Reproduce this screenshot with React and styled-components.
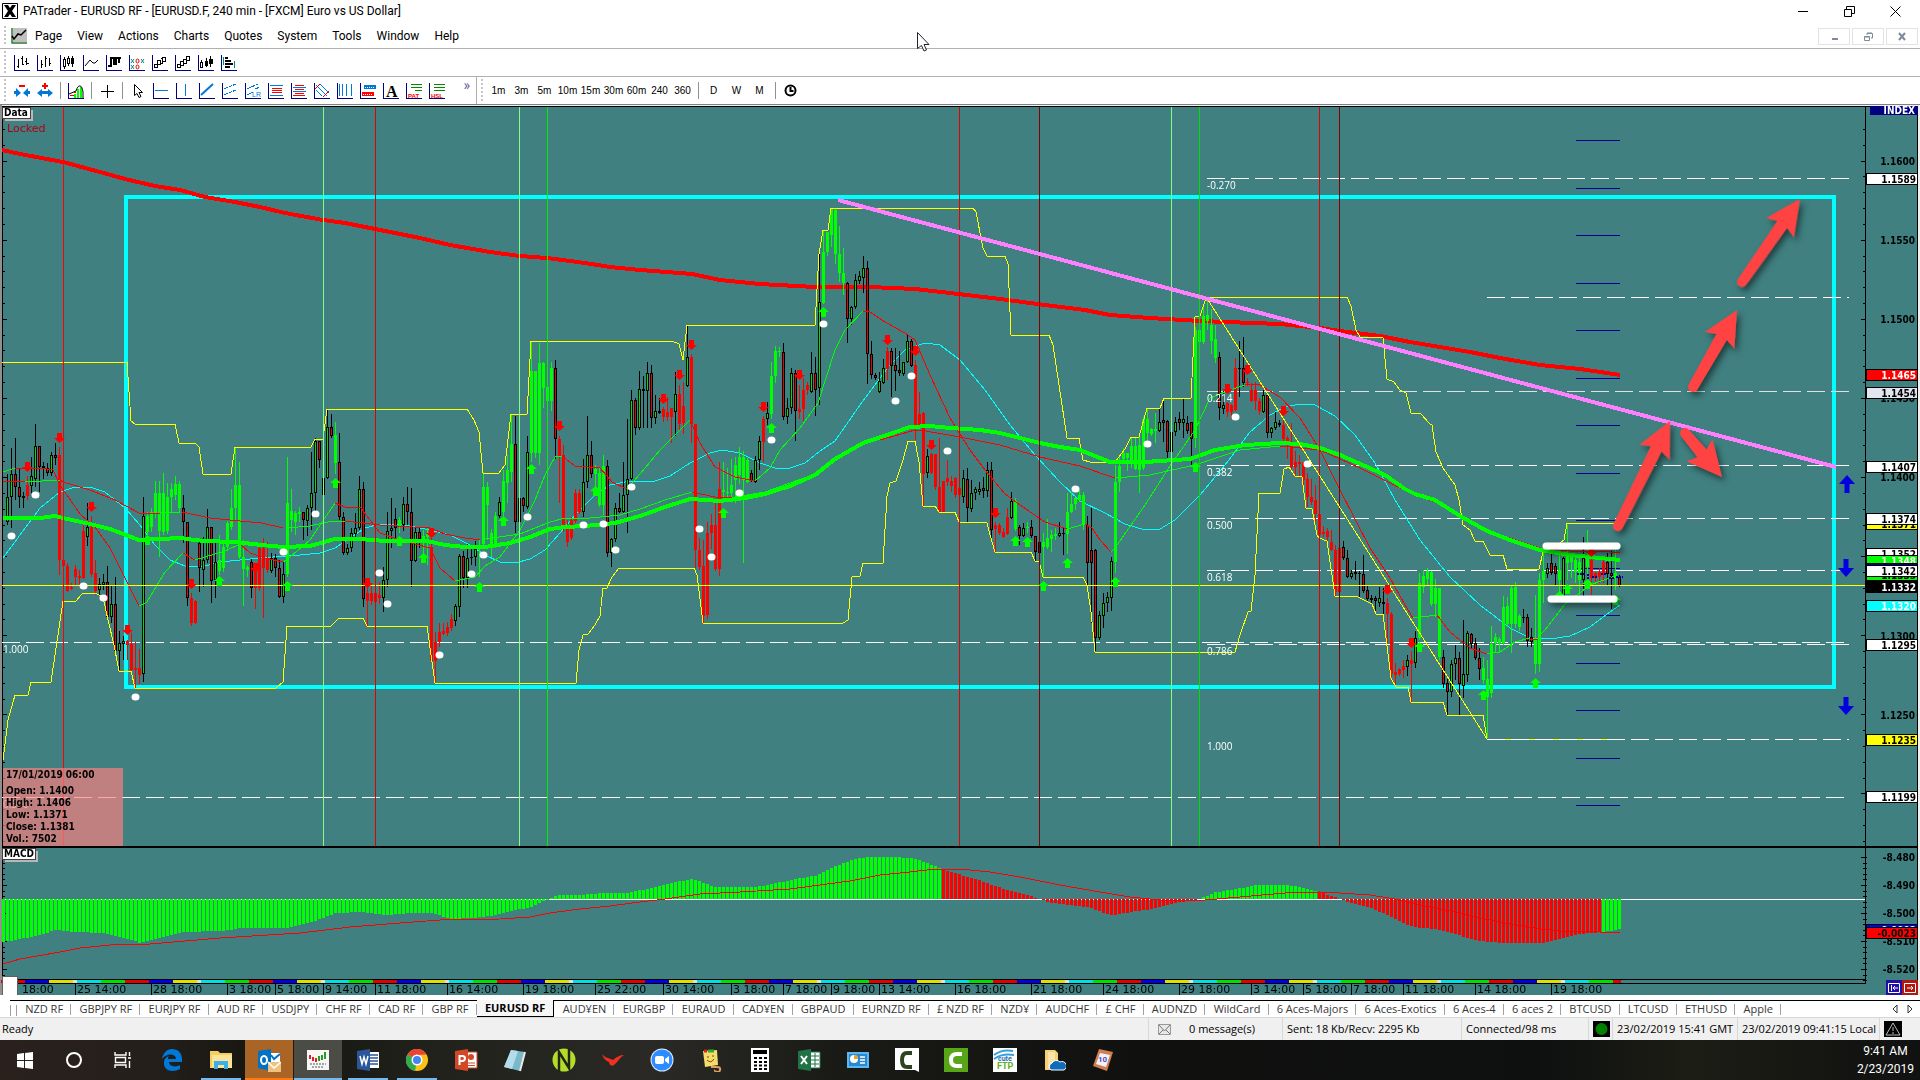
import React from "react";
import styled, { createGlobalStyle, css } from "styled-components";

const UI = `Roboto, "Open Sans", sans-serif`;
const LABEL = `"Open Sans", "Noto Sans", sans-serif`;
const TAHOMA = `"DejaVu Sans Condensed", "DejaVu Sans", sans-serif`;

const GlobalStyle = createGlobalStyle`
  *, *::before, *::after { box-sizing: border-box; }
  body { margin: 0; background: #fff; font-family: ${UI}; color: #000; }
  button { font: inherit; color: inherit; background: none; border: 0; padding: 0; margin: 0; }
`;

/* ---------- market data: bar kind, high, body top, body bottom, low ---------- */

const CANDLES = `
u474,497,522,525 u448,474,497,528 d438,474,487,500 d468,487,497,508 u492,496,498,508 r476,485,496,500 u457,476,486,493 u424,446,479,487 d446,446,467,492 u462,466,468,479
d463,468,473,476 u452,455,473,476 d443,455,458,465 r447,455,560,575 r540,560,566,572 r563,566,591,592 r583,587,589,590 r565,569,577,586 r570,576,578,587 r523,531,578,579
u503,527,537,546 r516,527,574,577 r560,573,591,595 u578,584,590,595 u574,582,585,590 d566,582,617,620 u585,604,617,623 d577,604,651,655 u631,643,651,670 u636,641,644,660
r640,641,645,660 r633,644,670,673 r642,668,670,688 r649,668,675,684 u497,516,674,682 g512,516,532,540 g508,512,527,532 g481,493,513,518 g481,493,531,557 g473,493,532,535
g483,497,531,534 g483,489,497,512 g476,484,495,500 g481,484,508,512 d495,508,522,543 d522,522,598,606 r593,598,623,626 r600,601,623,624 d541,543,568,592 u537,560,570,587
u509,527,560,563 d527,527,581,603 u542,562,580,598 g535,560,571,575 g540,547,568,572 g521,523,547,551 g489,508,527,530 g447,485,508,520 g462,485,557,559 g540,557,569,606
g565,567,570,577 d559,562,588,598 r565,567,588,609 r543,548,588,591 r538,548,568,618 r542,559,570,573 u553,558,571,573 d554,558,568,577 d560,568,597,598 u562,574,597,603
g457,503,574,577 g489,511,520,532 g511,513,522,535 g507,512,514,522 d512,512,520,540 u505,508,521,536 u452,493,508,530 u438,441,493,518 d441,441,460,468 u470,478,495,498
u409,427,478,479 d414,427,436,438 g422,435,463,474 d433,462,517,520 d512,517,553,555 u544,548,553,555 u528,533,548,552 u513,528,534,540 u476,489,528,530 d482,489,599,607
r587,593,601,626 r583,593,601,605 r593,593,602,605 r582,595,598,604 u567,580,598,612 u512,531,580,587 u498,528,531,548 d508,519,528,538 g517,520,527,533 u497,504,525,531
d487,504,512,525 d488,512,561,587 u527,532,561,562 d528,532,539,548 g530,536,539,555 g528,534,537,565 r538,547,661,662 r632,642,661,682 r623,632,642,647 r623,631,634,635
r622,627,633,636 r614,619,628,631 u604,606,621,626 u554,556,607,617 d551,556,578,588 u544,558,578,588 d546,557,558,565 u541,549,557,566 g539,545,547,577 g472,487,544,545
g482,487,505,540 g529,533,544,557 g512,516,544,548 u497,502,516,518 g470,481,512,522 g455,470,483,503 g414,444,472,482 d416,444,522,533 u497,498,522,524 d497,498,506,512
u436,452,507,509 g342,371,453,462 g371,371,453,458 g343,363,453,465 g362,363,388,408 g387,387,401,410 g362,368,401,411 d360,368,439,459 r436,439,456,503 r445,455,527,532
r520,527,542,547 r517,520,538,540 r489,493,521,523 r489,493,512,514 u459,482,512,517 u416,455,482,488 d441,455,474,478 g465,469,474,487 g467,473,505,507 g455,466,505,515
d460,466,553,557 u538,539,553,567 u503,508,539,542 d493,508,512,513 u462,495,512,513 u419,479,495,533 u390,400,479,480 d398,400,428,435 u371,389,428,430 u376,389,391,428
u362,373,391,428 d365,373,418,428 u395,411,418,424 u398,411,413,414 r407,409,417,422 r397,412,417,421 r408,408,417,443 u372,394,412,436 r385,394,424,431 r382,406,423,434
u325,357,386,387 r354,357,424,443 r424,424,550,568 r538,550,567,570 r540,566,616,623 r522,533,615,619 r514,525,533,549 r503,525,569,571 r462,489,569,576 g462,490,492,503
g468,492,493,497 g459,485,493,500 g457,465,480,503 g447,457,475,484 g451,457,480,563 g458,460,482,483 d470,473,481,482 u456,460,482,483 u436,441,460,470 r416,419,442,462
u402,413,419,425 g362,376,414,419 g346,351,376,383 g347,351,352,357 d343,352,417,420 u398,408,417,424 u368,373,408,414 d370,373,411,441 r385,409,412,419 r378,390,409,421
r382,385,390,395 u352,373,392,393 d357,373,390,416 u254,302,388,405 g230,252,303,304 g232,232,252,256 g209,209,235,247 g208,210,254,264 g226,254,273,282 g248,273,283,295
d282,283,319,343 u306,307,319,325 u274,280,307,309 u271,276,281,284 u256,268,278,293 d261,268,354,384 d341,354,375,379 d373,375,378,380 u372,381,392,393 u359,368,383,384
r347,351,369,380 d348,351,366,397 d348,365,371,391 d351,370,373,376 u362,362,374,376 u335,341,362,363 d339,341,366,367 r360,365,428,440 r392,414,427,428 r412,413,474,506
u449,456,473,478 r453,454,473,474 r454,454,487,490 r438,487,512,513 r481,481,512,513 r460,478,482,486 r476,481,486,492 r477,478,495,498 r483,488,495,498 u470,478,497,503
d468,479,508,522 u480,493,509,512 u487,489,493,500 u482,489,492,495 d477,488,491,498 u462,470,491,497 d462,470,530,538 r522,525,529,552 r523,525,533,535 r528,532,537,538
r508,517,534,535 u492,501,518,519 g498,501,529,531 d525,527,536,545 u523,528,536,537 g522,527,528,533 d520,527,536,538 d536,536,552,561 d542,542,553,554 g533,542,547,577
g519,538,547,549 g530,535,539,552 g528,534,536,540 u522,533,536,537 d528,533,534,555 g493,512,534,554 g492,504,512,513 g497,498,504,510 g490,495,500,502 g492,495,525,530
d516,525,563,587 d508,550,563,623 d549,550,638,651 u611,615,638,640 u593,603,616,628 u592,597,603,612 u557,561,598,611 g465,482,562,573 g455,466,482,492 g448,453,459,462
g453,453,458,471 g437,446,460,468 g437,446,469,470 g435,445,470,493 g417,419,468,470 g408,419,433,440 g428,429,434,436 g413,429,431,443 u409,422,431,432 d398,420,423,442
d420,421,452,460 u430,432,452,453 u417,422,432,436 d412,419,423,430 u398,419,423,438 d416,423,431,434 d422,422,439,465 g327,330,438,448 g316,330,342,345 g307,316,342,344
g300,315,321,330 g309,325,341,354 g325,339,358,363 d352,357,408,420 u391,405,409,414 r402,403,412,417 r404,405,412,419 r358,368,410,411 d341,368,369,397 d337,368,383,387
r378,382,383,386 r383,390,401,402 r382,390,401,410 r398,401,411,415 u390,395,412,413 d395,395,433,438 u427,428,433,438 u412,422,428,430 u420,423,425,427 r420,425,439,444
r436,438,444,459 r423,443,467,469 r451,462,467,476 r455,462,464,478 r462,463,480,487 r473,479,497,507 r479,497,502,505 r485,500,514,522 r514,514,535,536 r526,532,534,537
r528,531,537,542 r530,542,550,551 r545,550,592,597 r547,548,592,596 d541,547,558,560 d550,558,577,578 u570,573,577,579 u561,572,574,580 d571,573,574,598 d555,574,591,593
d585,590,599,602 u595,598,600,603 d596,598,601,614 u587,598,603,607 d588,602,604,615 r598,603,614,643 r612,614,674,677 r663,672,675,687 r668,669,674,676 r660,666,670,678
u655,660,667,676 r651,660,664,702 u631,638,663,668 g573,583,638,640 g570,576,587,593 g568,571,579,586 g571,572,604,606 g579,588,604,617 g588,588,657,660 d650,657,684,688
d679,683,692,715 u660,664,692,697 u645,658,664,680 d652,658,684,715 u620,674,686,698 u631,633,675,682 d633,634,644,649 d638,643,658,660 d648,658,669,680 g657,668,680,684
g660,679,697,738 g626,644,693,698 g633,637,643,652 g637,639,643,653 g596,607,643,645 g597,606,624,627 g586,588,624,653 g582,587,624,628 g614,616,627,631 d609,617,618,623
d614,617,641,647 d628,637,642,647 g595,638,664,674 g573,580,664,672 g552,571,580,603 u563,568,574,578 d550,563,573,575 d563,566,574,585 g555,570,580,595 u557,558,596,597
g525,554,563,580 g553,557,562,578 g555,560,572,583 g557,562,580,595 u537,558,580,597 g530,558,567,577 r558,560,578,595 r572,573,578,583 r568,572,577,583 r558,562,574,583
d553,562,574,585 d551,573,576,609 g550,573,578,590 d575,577,586,587`
  .trim()
  .split(/\s+/)
  .map((t, i) => {
    const [hi, top, bottom, lo] = t.slice(1).split(",").map(Number);
    return { kind: t[0], x: 7 + i * 4, hi, top, bottom, lo };
  });

const RED_DOWN = [
  [27, 467], [59, 438], [559, 426], [91, 507], [127, 630], [191, 584], [255, 568], [367, 583], [431, 533],
  [663, 399], [679, 375], [691, 345], [763, 407], [799, 375], [887, 340], [915, 351], [931, 445], [1227, 389],
  [1247, 370], [995, 513], [1283, 411], [1387, 590], [1411, 643], [1591, 552],
];
const GREEN_UP = [
  [335, 483], [531, 469], [595, 491], [147, 540], [219, 581], [287, 586], [399, 541], [423, 558], [479, 587],
  [503, 521], [771, 428], [823, 312], [1195, 467], [723, 513], [1015, 541], [1027, 542], [1043, 586], [1067, 563],
  [1115, 582], [1419, 647], [1483, 695], [1535, 683], [1567, 589], [1587, 584], [1559, 596], [1615, 600],
];
const DOTS = [
  [35, 495], [11, 536], [83, 586], [103, 598], [135, 697], [283, 552], [315, 514], [379, 573], [387, 604],
  [439, 655], [471, 574], [483, 555], [527, 517], [583, 525], [603, 524], [615, 550], [631, 487], [739, 493],
  [771, 440], [823, 324], [895, 401], [911, 376], [947, 451], [1075, 489], [1147, 444], [1235, 417], [699, 529],
  [711, 557], [1307, 464],
];

const VLINES = [
  [63, "#f00"], [323, "#80ff80"], [375, "#e00000"], [519, "#80ff80"], [547, "#00f000"], [959, "#e00000"],
  [1039, "#800000"], [1171, "#80ff80"], [1199, "#00e000"], [1319, "#e00000"], [1339, "#800000"],
];

const SLOW_MA = "2,150 20,154 63,162 100,172 125,179 155,186 180,190 205,197 235,202 260,207 285,213 323,220 345,223 375,229 400,234 420,238 450,245 490,252 520,256 547,258 585,263 610,267 640,270 692,274 720,280 760,284 815,287 870,287 915,289 950,293 1000,299 1045,305 1085,310 1110,315 1150,318 1200,321 1280,324 1320,328 1340,331 1380,336 1410,342 1440,347 1470,352 1500,358 1540,365 1580,369 1620,375";
const MID_MA = "3,518 40,518 55,516 63,518 90,524 110,529 139,540 180,538 195,540 205,541 235,542 262,545 283,547 310,546 335,539 360,539 385,541 427,541 445,545 465,547 485,547 510,543 530,537 550,529 565,527 585,526 615,523 640,516 665,507 690,499 720,501 745,498 765,494 790,486 815,475 835,459 863,443 890,434 910,427 930,426 950,428 980,430 1000,433 1020,438 1040,443 1060,447 1080,450 1110,462 1145,462 1190,459 1215,450 1245,445 1280,443 1300,444 1320,448 1340,455 1365,466 1385,475 1405,489 1415,494 1435,500 1460,516 1487,531 1510,540 1540,550 1570,555 1620,560";
const CYAN_MA = "3,558 20,535 40,508 60,492 75,487 90,487 105,492 125,508 140,525 155,545 170,560 185,566 205,566 220,562 260,558 300,555 320,553 335,548 350,538 365,528 380,524 400,524 430,530 450,535 470,545 485,555 500,562 515,563 530,559 545,550 560,533 575,515 595,495 610,485 625,482 655,481 670,476 690,463 710,453 722,450 740,453 760,463 775,468 790,468 805,463 820,451 835,441 860,405 890,365 905,350 925,343 940,345 960,360 985,390 1010,425 1035,455 1060,482 1080,501 1105,513 1125,524 1145,530 1160,529 1175,520 1200,495 1225,465 1250,432 1270,415 1285,407 1300,404 1315,405 1335,416 1355,435 1375,463 1395,500 1420,540 1450,577 1480,605 1510,628 1530,638 1550,639 1570,636 1590,627 1610,612 1620,605";
const UPPER = "2,362 127,362 131,421 135,424 175,424 179,443 195,443 199,447 203,474 231,474 235,447 311,447 315,439 323,439 327,409 467,409 474,420 479,432 483,473 499,473 505,465 511,414 527,414 531,341 672,341 679,344 683,360 687,325 815,325 819,254 823,230 828,230 831,208 973,208 976,212 983,248 987,256 1005,256 1008,264 1011,335 1049,335 1053,345 1067,438 1079,438 1083,460 1090,462 1115,462 1125,449 1131,437 1139,437 1147,408 1160,408 1164,398 1191,398 1195,317 1200,316 1205,301 1210,297 1347,297 1351,306 1356,330 1360,337 1383,338 1387,379 1394,382 1400,390 1406,393 1411,413 1420,413 1430,424 1432,425 1436,452 1443,468 1455,485 1459,500 1463,525 1470,530 1475,541 1483,541 1490,555 1503,555 1507,569 1539,569 1543,552 1560,543 1564,540 1567,523 1619,523";
const LOWER = "3,760 8,720 15,695 28,695 31,682 51,682 55,655 63,601 76,601 82,594 95,593 103,597 108,620 114,645 119,671 131,671 135,688 276,688 283,682 287,626 331,626 339,618 363,618 367,626 427,626 435,683 576,683 579,650 583,635 588,634 595,625 600,616 603,588 607,588 612,577 619,568 694,568 697,575 703,623 843,623 848,620 852,577 860,576 863,563 883,563 887,496 890,483 896,481 903,460 908,441 915,441 919,462 923,506 935,506 939,512 955,512 959,522 987,523 990,535 995,552 1031,552 1035,561 1039,561 1043,577 1083,577 1087,585 1091,612 1095,652 1235,652 1240,635 1248,612 1251,611 1255,575 1259,493 1280,493 1284,469 1289,467 1295,476 1302,477 1306,508 1312,509 1317,535 1319,538 1327,541 1335,596 1356,596 1372,604 1376,614 1383,614 1391,678 1396,687 1408,687 1411,702 1443,702 1447,715 1483,715 1487,739 1620,739";

const THIN = [
  ["r", "3,481 25,482"], ["g", "25,482 60,480"],
  ["r", "60,480 63,482 90,490 115,500 139,513 160,513"], ["g", "160,513 180,512"],
  ["r", "182,512 210,518 240,521 262,523 283,528"], ["g", "287,528 310,526 332,521 345,521"],
  ["r", "345,521 380,525 430,528 445,534 465,538 480,540"],
  ["g", "485,539 520,534 550,522 565,518 590,518 620,515 640,509 665,500 692,492"],
  ["r", "692,492 715,497 735,497"], ["g", "735,497 765,492 815,474 860,445"],
  ["r", "880,440 915,430 920,430 960,437 1000,445 1040,457 1080,466 1115,478"],
  ["g", "1115,478 1150,475 1195,465 1240,450 1280,446"],
  ["r", "1280,446 1320,450 1360,468 1410,493 1435,502 1487,530 1510,538 1540,548 1570,551 1600,551 1620,553"],
  ["g", "3,472 15,468"], ["r", "15,468 40,468 53,470 60,485 80,514 95,527 110,548 139,606"],
  ["g", "139,606 147,602 165,572 183,553"], ["r", "183,553 195,560"], ["g", "195,560 225,551 240,544"],
  ["r", "240,544 250,553 265,558 283,562"], ["g", "283,562 290,557 310,540 335,503"],
  ["r", "335,503 345,507 360,507 380,533 400,540 430,548 440,568 455,581"],
  ["g", "455,581 475,577 485,566 500,557 520,530 535,500 545,475 555,457 562,456"],
  ["r", "562,456 575,466 600,468 612,482 627,489"], ["g", "627,489 640,474 660,450 690,420"],
  ["r", "690,420 700,443 715,467 735,477 755,481"],
  ["g", "755,481 770,468 780,450 800,428 818,403 835,350 845,330 863,311"],
  ["r", "863,311 870,312 885,322 905,333 915,340 930,375 950,418 970,450 985,470 1005,494 1020,505 1045,522 1067,529"],
  ["g", "1067,529 1085,524"], ["r", "1085,524 1092,528 1100,540 1111,552"],
  ["g", "1111,552 1115,548 1145,505 1170,466 1195,430 1210,398 1230,390 1245,385"],
  ["r", "1245,385 1258,384 1280,397 1300,418 1320,450 1340,490 1370,548 1390,578 1405,605 1413,618"],
  ["g", "1413,618 1437,615"], ["r", "1437,615 1450,632 1470,648 1487,654"],
  ["g", "1487,654 1500,652 1515,642 1530,638"], ["r", "1530,640 1538,639"], ["g", "1538,637 1545,630 1565,604 1590,585 1615,576"],
];

const SIGNAL = "3,964 20,959 60,952 80,948 120,944 150,944 220,938 300,933 350,927 400,923 440,920 500,919 530,917 550,913 580,909 610,906 640,902 665,899 700,894 740,892 790,889 820,885 850,881 880,875 910,872 935,869 960,869 990,872 1020,877 1060,885 1100,892 1130,897 1160,900 1205,900 1240,897 1285,893 1320,892 1340,893 1370,895 1395,899 1420,905 1450,911 1480,918 1510,924 1540,929 1560,931 1600,932 1620,932";

const HIST_POINTS = [
  [3, 942], [30, 937], [55, 930], [75, 932], [100, 933], [120, 937], [139, 943], [160, 937], [180, 932], [220, 931],
  [240, 928], [285, 928], [310, 922], [335, 913], [360, 912], [385, 915], [410, 913], [430, 913], [450, 919], [470, 918],
  [490, 916], [510, 911], [530, 907], [545, 900], [555, 895], [580, 895], [600, 893], [625, 893], [640, 890], [660, 885],
  [675, 882], [692, 879], [705, 884], [715, 887], [755, 887], [775, 883], [800, 878], [817, 875], [830, 868], [850, 860],
  [865, 857], [890, 857], [912, 858], [930, 865], [941, 869], [960, 875], [980, 881], [1000, 888], [1020, 893], [1035, 898],
  [1041, 900], [1050, 903], [1070, 905], [1090, 908], [1100, 912], [1112, 915], [1130, 912], [1150, 909], [1165, 905],
  [1180, 902], [1195, 900], [1215, 892], [1235, 889], [1255, 885], [1285, 885], [1300, 887], [1315, 891], [1330, 896],
  [1342, 900], [1350, 903], [1370, 908], [1390, 917], [1400, 922], [1412, 927], [1435, 929], [1460, 936], [1480, 941],
  [1500, 943], [1540, 943], [1560, 938], [1580, 934], [1600, 932], [1620, 929],
];

function histogramAt(x) {
  for (let i = 1; i < HIST_POINTS.length; i += 1) {
    const [x1, y1] = HIST_POINTS[i];
    const [x0, y0] = HIST_POINTS[i - 1];
    if (x <= x1) return Math.round(y0 + ((y1 - y0) * (x - x0)) / (x1 - x0));
  }
  return 929;
}

const HISTOGRAM = Array.from({ length: 405 }, (_, i) => {
  const x = 2 + i * 4;
  const fill = x < 941 || (x > 1196 && x < 1317) || x > 1600 ? "#0f0" : "#f00";
  return { x, y: histogramAt(x), fill };
});

const TIMES = [
  [20, "18:00", false], [75, "25 14:00", true], [151, "28 18:00", true], [227, "3 18:00", true], [275, "5 18:00", true],
  [323, "9 14:00", true], [375, "11 18:00", true], [447, "16 14:00", true], [523, "19 18:00", true], [595, "25 22:00", true],
  [663, "30 14:00", true], [731, "3 18:00", true], [783, "7 18:00", true], [831, "9 18:00", true], [879, "13 14:00", true],
  [955, "16 18:00", true], [1031, "21 18:00", true], [1103, "24 18:00", true], [1179, "29 18:00", true], [1251, "3 14:00", true],
  [1303, "5 18:00", true], [1351, "7 18:00", true], [1403, "11 18:00", true], [1475, "14 18:00", true], [1551, "19 18:00", true],
];

const WEEK = [["#e00000", 24], ["#0000e0", 24], ["#e0e000", 24], ["#e0e0e0", 4], ["#00e0e0", 24], ["#00e000", 24]];
const WEEK_STRIP = [];
for (let start = 1; start < 1621; start += 124) {
  let x = start;
  WEEK.forEach(([fill, w]) => {
    if (x < 1621) WEEK_STRIP.push({ x, fill, w: Math.min(w, 1621 - x) });
    x += w;
  });
}

const PLAIN_PRICES = [
  ["1.1600", 161], ["1.1550", 240], ["1.1500", 319], ["1.1450", 398], ["1.1400", 477], ["1.1300", 636], ["1.1250", 715],
  ["-8.480", 857], ["-8.490", 885], ["-8.500", 913], ["-8.510", 941], ["-8.520", 969],
];
const TAGS = [
  ["1.1589", 179, "#fff", "#000"], ["1.1465", 375, "#f00", "#fff"], ["1.1454", 393, "#e4e4f0", "#000"],
  ["1.1407", 467, "#fff", "#000"], ["1.1371", 524, "#ff0", "#000"], ["1.1374", 519, "#fff", "#000"],
  ["1.1352", 554, "#fff", "#000"], ["1.1348", 561, "#0f0", "#fff"], ["1.1343", 569, "#000090", "#fff"],
  ["1.1335", 575, "#0f0", "#000"], ["1.1342", 571, "#fff", "#000"], ["1.1332", 587, "#000", "#fff"],
  ["1.1320", 606, "#0ff", "#fff"], ["1.1295", 645, "#fff", "#000"], ["1.1235", 740, "#ff0", "#000"],
  ["1.1199", 797, "#fff", "#000"], ["0.0002", 930, "#00f", "#fff"], ["-0.0023", 933, "#f00", "#000"],
];
const FIB = [["-0.270", 189], ["0.214", 402], ["0.382", 476], ["0.500", 529], ["0.618", 581], ["0.786", 655], ["1.000", 750]];
const DASHED = [
  [1207, 1849, 178, "#fff"], [1207, 1849, 391, "#e0e0e0"], [1207, 1849, 465, "#fff"], [1207, 1849, 518, "#fff"],
  [1207, 1849, 570, "#fff"], [1207, 1849, 644, "#fff"], [2, 1845, 642, "#fff"], [2, 1849, 797, "#fff"],
  [1487, 1849, 297, "#fff"],
];
const PIVOTS = [140, 188, 235, 283, 330, 378, 425, 473, 520, 568, 615, 663, 710, 758, 805];
const PRICE_TICKS = Array.from({ length: 46 }, (_, i) => ({ y: Math.round(129 + i * 15.82), major: i % 5 === 2 }));
const MACD_TICKS = Array.from({ length: 23 }, (_, i) => ({ y: Math.round(857 + i * 5.6), major: i % 5 === 0 }));
const READOUT = [["17/01/2019 06:00", 778], ["Open: 1.1400", 794], ["High: 1.1406", 806], ["Low: 1.1371", 818], ["Close: 1.1381", 830], ["Vol.: 7502", 842]];

/* ---------- shell ---------- */

const Window = styled.div`
  display: flex;
  flex-direction: column;
  min-height: 100vh;
  font-size: 12px;
  line-height: 16px;
`;

const TitleBar = styled.header`
  display: flex;
  align-items: center;
  gap: 5px;
  height: 24px;
  padding: 0 0 2px 2px;
`;

const Title = styled.h1`
  flex: 1;
  margin: 0;
  font-size: 12px;
  font-weight: 400;
`;

const CaptionButton = styled.button`
  display: grid;
  place-items: center;
  width: 46px;
  height: 20px;
`;

const CaptionGroup = styled.div`
  display: flex;
  padding-right: 2px;
`;

const Grip = styled.span`
  width: 2px;
  align-self: stretch;
  margin: 2px 0;
  background: repeating-linear-gradient(#c4c4c4 0 2px, transparent 2px 4px);
`;

const MenuBar = styled.nav`
  position: relative;
  display: flex;
  align-items: center;
  height: 25px;
  padding-left: 4px;
  border-bottom: 1px solid #b0b0b0;
`;

const MenuIcon = styled.svg`
  width: 16px;
  height: 16px;
  margin: 0 0 0 5px;
`;

const MenuButton = styled.button`
  padding: 0 7px 0 8px;
`;

const MdiGroup = styled.div`
  display: flex;
  gap: 2px;
  margin-left: auto;
  padding-right: 2px;
`;

const MdiButton = styled.button`
  display: grid;
  place-items: center;
  width: 32px;
  height: 17px;
  border: 1px solid #e2e2e2;
`;

const Pointer = styled.svg`
  position: absolute;
  left: 917px;
  top: 8px;
  width: 13px;
  height: 20px;
`;

const ToolBar = styled.div`
  display: flex;
  align-items: center;
  height: 28px;
  padding-left: 4px;
  border-bottom: 1px solid ${(p) => (p.$last ? "#808080" : "#b0b0b0")};
`;

const ToolSet = styled.div`
  display: flex;
  align-items: center;
  padding-left: 4px;
`;

const ToolButton = styled.button`
  display: grid;
  place-items: center;
  width: 23px;
  height: 22px;
  font-family: "Liberation Sans", Arial, sans-serif;
  font-size: 10px;
  line-height: 12px;
`;

const Divider = styled.span`
  width: 1px;
  height: 17px;
  margin: 0 3px 0 4px;
  background: #909090;
`;

const More = styled.button`
  align-self: flex-start;
  width: 28px;
  height: 15px;
  padding-right: 6px;
  color: #6060a8;
  font-size: 14px;
  line-height: 12px;
  text-align: right;
`;

const FullDivider = styled.span`
  width: 1px;
  align-self: stretch;
  margin: 0 4px 0 0;
  background: #b0b0b0;
`;

const Chart = styled.svg`
  display: block;
  width: 100%;
  height: auto;
  text { white-space: pre; }
`;

/* ---------- page tabs ---------- */

const TabBar = styled.nav`
  display: flex;
  align-items: stretch;
  height: 18px;
  margin-top: 5px;
  padding-left: 10px;
  border-bottom: 1px solid #d8d8d8;
  font-family: ${LABEL};
  font-size: 11px;
`;

const TabList = styled.div`
  display: flex;
  flex: 1;
  border-top: 1px solid #000;
`;

const TabLead = styled.span`
  width: 7px;
  margin-top: 4px;
  height: 11px;
  border-left: 1px solid #a0a0a0;
  border-right: 1px solid #a0a0a0;
`;

const Tab = styled.button`
  position: relative;
  flex: 1 1 auto;
  height: 16px;
  color: #383838;
  line-height: 14px;
  white-space: nowrap;
  &::after {
    content: "";
    position: absolute;
    right: 0;
    top: 3px;
    height: 11px;
    border-right: 1px solid #a0a0a0;
  }
  ${(p) =>
    p.$active &&
    css`
      color: #000;
      font-weight: 700;
      background: #f6f6f6;
      border-right: 1px solid #000;
      border-bottom: 1px solid #000;
      margin-top: -1px;
      height: 17px;
      &::after { display: none; }
    `}
`;

const TabArrows = styled.div`
  display: flex;
  justify-content: flex-end;
  width: 139px;
  padding-right: 3px;
  border-top: 1px solid #000;
`;

const ArrowButton = styled.button`
  display: grid;
  place-items: center;
  width: 15px;
`;

/* ---------- status bar ---------- */

const StatusBar = styled.footer`
  display: grid;
  grid-template-columns: 1fr 134px 179px 127px 24px 125px 142px 41px;
  align-items: stretch;
  height: 22px;
  background: #f0f0f0;
  font-family: ${LABEL};
  font-size: 11px;
  white-space: nowrap;
`;

const StatusCell = styled.span`
  display: flex;
  align-items: center;
  padding-left: ${(p) => p.$pad ?? 4}px;
  gap: 18px;
  border-left: ${(p) => (p.$first ? "0" : "1px solid #d8d8d8")};
`;

/* ---------- taskbar ---------- */

const Taskbar = styled.nav`
  display: flex;
  align-items: stretch;
  height: 40px;
  background: linear-gradient(90deg, #2a211d 0, #241f1b 8%, #14150f 14%, #20211b 22%, #2a2926 34%, #1a1b16 43%, #10110f 60%, #0e1010 80%, #1c1d14 88%, #101111 100%);
  color: #fff;
`;

const TaskButton = styled.button`
  display: grid;
  place-items: center;
  width: 49px;
  height: 40px;
  background: ${(p) => (p.$tone === "alert" ? "#aa6425" : p.$tone === "active" ? "#4b4c45" : "transparent")};
  border-right: ${(p) => (p.$tone ? "1px solid #1a1a18" : "0")};
  box-shadow: ${(p) =>
    p.$tone === "alert" ? "inset 0 -2px #ff7a10" : p.$tone === "active" ? "inset 0 -2px #76b9ed" : "none"};
  background-image: ${(p) => (p.$running ? "linear-gradient(#76b9ed, #76b9ed)" : "none")};
  background-size: 40px 2px;
  background-position: center bottom;
  background-repeat: no-repeat;
  svg { width: 24px; height: 24px; display: block; }
`;

const Clock = styled.time`
  display: flex;
  flex-direction: column;
  justify-content: center;
  align-items: center;
  margin-left: auto;
  padding-right: 6px;
  line-height: 18px;
`;

/* ---------- toolbar drawings ---------- */

const Axes = () => <path d="M.5 0V15.5H16" stroke="#000080" fill="none" />;
const K = (props) => <path fill="none" stroke="#000" {...props} />;
const B = (props) => <path fill="none" stroke="#0078d7" {...props} />;

const Glyph = ({ children, label }) => (
  <svg width="16" height="16" viewBox="0 0 16 16" role="img" aria-label={label} shapeRendering="crispEdges">
    {children}
  </svg>
);

const CHART_STYLES = [
  ["Bars", <><Axes /><K d="M4.5 4V13M3 11.5H4M8.5 1V10M7 3.5H8M9 9.5H10M12.5 3V10M11 6.5H12M13 8.5H15" /></>],
  ["HLC bars", <><Axes /><K d="M4.5 5V13M5 9.5H6M8.5 1V12M9 3.5H10M12.5 3V11M13 8.5H14" /></>],
  ["Candles", <><Axes /><K d="M4.5 2V4M4.5 11V14M3.5 4.5H5.5V11.5H3.5ZM8.5 1V3M8.5 8V11M7.5 3.5H9.5V8.5H7.5ZM12.5 1V12" /><path d="M11 3h3v6h-3z" /></>],
  ["Line", <><Axes /><path d="M2 11L7 5L10 8H12L15 5" fill="none" stroke="#000" shapeRendering="auto" /></>],
  ["Swing", <><Axes /><K strokeWidth="2" d="M2 11H5V3H8V9H10V3H15M13 3V8" /></>],
  ["Point and figure", <><Axes /><g shapeRendering="auto" fill="none"><path d="M2 4l3 4M5 4l-3 4M2 10l3 4M5 10l-3 4M12 4l3 4M15 4l-3 4" stroke="#088" /><ellipse cx="8.500" cy="6" rx="1.500" ry="2" stroke="#e00" /><ellipse cx="8.500" cy="12" rx="1.500" ry="2" stroke="#e00" /></g></>],
  ["Renko", <><Axes /><K d="M2.500 9.500h3v3h-3zM5.500 5.500h3v4h-3zM8.500 5.500v4M10.500 3.500v5h-2M8.500 3.500h2M10.500 2.500h3v4h-3z" /></>],
  ["Three line break", <><Axes /><K d="M2.500 9.500h3v3h-3zM5.500 6.500h3v4h-3zM8.500 4.500h3v4h-3zM11.500 1.500h3v4h-3z" /></>],
  ["Volume candles", <><Axes /><K d="M2.500 7.500h2v5h-2zM3.500 5v2M8.500 3V12M7.500 6.500h2v4h-2zM12.500 1V12" /><path d="M11 4h4v5h-4z" /></>],
  ["Market profile", <><Axes /><path d="M2.500 2v8M13.500 6v7" stroke="#088" /><K d="M4 3H7M4 6H10M4 9H12M4 12H9" strokeWidth="2" /></>],
];

const DRAW_TOOLS = [
  ["Horizontal line", <><Axes /><B d="M2 7.500H15" /></>],
  ["Vertical line", <><Axes /><B d="M9.500 1V13" /></>],
  ["Trend line", <><Axes /><path d="M2 12L14 1" fill="none" stroke="#0078d7" strokeWidth="2" shapeRendering="auto" /></>],
  ["Parallel lines", <><Axes /><B d="M2 6L14 1M2 12L14 7" strokeDasharray="4 1" /></>],
  ["Linear regression", <><Axes /><B d="M2 6L13 1M2 12L8 9M10 6L15 4" strokeDasharray="4 1" /><text x="7" y="14" fontSize="7" fill="#0078d7">LR</text></>],
  ["Fibonacci retracement", <><Axes /><B d="M2 2.500H15M2 12.500H15" /><path d="M4 5.500h10M4 7.500h10M4 9.500h10" stroke="#f00" /></>],
  ["Fibonacci extension", <><Axes /><B d="M2 4.500H15M2 8.500H15" /><path d="M4 2.500h9M4 6.500h9M4 10.500h9M2 12.500h12" stroke="#f00" /></>],
  ["Fibonacci fan", <><Axes /><g shapeRendering="auto" fill="none"><path d="M2 2L13 13M6 1L15 10M2 7L8 13" stroke="#0078d7" /><path d="M1 6L6 1M9 14L15 8" stroke="#e00" /></g></>],
  ["Time zones", <><Axes /><B d="M2.500 1V13M5.500 1V13M9.500 1V13M14.500 1V13" /></>],
  ["Pattern boxes", <><Axes /><path d="M4 2h12v4h-12z" fill="#0078d7" /><path d="M2 9h12v4h-12z" fill="#f00" /><path d="M5 4h10M3 11h10" stroke="#fff" strokeDasharray="1 1" /></>],
  ["Text", <><Axes /><text x="3" y="14" fontSize="16" fontWeight="700" fontFamily="Liberation Serif">A</text></>],
  ["Pattern lines", <><Axes /><path d="M5 1.500h11M5 4.500h11M9 7.500h7" stroke="#080" /><text x="2" y="15" fontSize="6" fontWeight="700" fill="#e00">PAT</text></>],
  ["Horizontal support lines", <><Axes /><path d="M5 1.500h11M5 4.500h11M5 7.500h11" stroke="#080" /><text x="2" y="15" fontSize="6" fontWeight="700" fill="#e00">HSL</text></>],
];

const LogoX = () => (
  <svg width="16" height="16" viewBox="0 0 16 16" aria-hidden="true">
    <path d="M.5.500h15v15H.5z" fill="#fff" stroke="#000" />
    <path d="M2 2h4l2 3 2-3h4l-4 6 4 6h-4l-2-3-2 3H2l4-6z" />
  </svg>
);

/* ---------- chart parts ---------- */

const BODY = { u: "#0d0", d: "#e00", g: "#0f0", r: "#f00" };

const Candle = ({ kind, x, hi, top, bottom, lo }) => {
  const solid = kind === "g" || kind === "r";
  const color = solid ? BODY[kind] : "#000";
  const height = Math.max(1, bottom - top);
  return (
    <>
      <rect x={x} y={hi} width="1" height={lo - hi} fill={color} />
      <rect x={x - 1} y={top} width="3" height={height} fill={color} />
      {!solid && height > 2 && <rect x={x} y={top + 1} width="1" height={height - 2} fill={BODY[kind]} />}
    </>
  );
};

const Hatch = ({ x0, x1, y, color }) => (
  <path d={`M${x0} ${y}.5H${x1}`} stroke={color} strokeDasharray="18 6" />
);

const BigArrow = ({ x0, y0, x1, y1 }) => {
  const len = Math.hypot(x1 - x0, y1 - y0);
  const deg = (Math.atan2(y1 - y0, x1 - x0) * 180) / Math.PI;
  const head = len - 35;
  return (
    <g transform={`translate(${x0} ${y0}) rotate(${deg})`}>
      <path d={`M0-5A5 5 0 0 0 0 5L${head + 4} 6L${head} 17L${len} 0L${head} -17L${head + 4} -6Z`} fill="#ff4242" />
    </g>
  );
};

const BlueArrow = ({ x, y, up }) => (
  <path
    d="M0-9L8 0H2.500V9H-2.500V0H-8Z"
    transform={`translate(${x} ${y})${up ? "" : " rotate(180)"}`}
    fill="#0000e0"
  />
);

const PriceTag = ({ value, y, fill, ink }) => (
  <g>
    <rect x="1866.500" y={y - 5.5} width="51" height="11" fill={fill} stroke="#000" />
    <text x="1916" y={y + 4} textAnchor="end" fill={ink}>{value}</text>
  </g>
);

const PanelLabel = ({ x, y, width, children }) => (
  <g>
    <rect x={x + 3} y={y + 3} width={width} height="11" fill="#b8b8b8" />
    <rect x={x + 0.5} y={y + 0.5} width={width} height="11" fill="#fff" stroke="#404040" />
    <text x={x + 2} y={y + 9} fontWeight="700">{children}</text>
  </g>
);

const PriceChart = () => (
  <Chart viewBox="0 105 1920 890" role="img" aria-label="EURUSD 240 minute chart with MACD" fontFamily={TAHOMA} fontSize="10">
    <defs>
      <filter id="lift" x="-20%" y="-20%" width="150%" height="150%">
        <feDropShadow dx="3" dy="4" stdDeviation="3" floodColor="#000" floodOpacity=".5" />
      </filter>
    </defs>
    <rect x="0" y="105" width="1920" height="890" fill="#f0f0f0" />
    <rect x="0" y="105" width="2" height="890" fill="#909090" />
    <rect x="2" y="106" width="1916" height="889" fill="#408080" />
    <g shapeRendering="crispEdges" fill="none">
      <path d="M2.500 106V980M2 106.500H1918M1865.500 106V983M1917.500 106V995" stroke="#000" />
      {PRICE_TICKS.map(({ y, major }) => (
        <path key={y} d={`M3 ${y}.5H${major ? 7 : 5}M${major ? 1861 : 1863} ${y}.5H1865`} stroke="#000" />
      ))}
      {MACD_TICKS.map(({ y, major }) => (
        <path key={y} d={`M3 ${y}.5H${major ? 7 : 5}M${major ? 1861 : 1863} ${y}.5H1867`} stroke="#000" />
      ))}
      <path d="M126 197H1834V687H126Z" stroke="#0ff" strokeWidth="4" />
      {DASHED.map(([x0, x1, y, color]) => <Hatch key={y} x0={x0} x1={x1} y={y} color={color} />)}
      {PIVOTS.map((y) => <path key={y} d={`M1576 ${y}.5H1620`} stroke="#000098" />)}
      <polyline points={SLOW_MA} stroke="#f00" strokeWidth="4" />
      <polyline points={CYAN_MA} stroke="#0ff" />
      {CANDLES.map((c) => <Candle key={c.x} {...c} />)}
      <polyline points={UPPER} stroke="#ff0" />
      <polyline points={LOWER} stroke="#ff0" />
      <Hatch x0={1487} x1={1849} y={739} color="#fff" />
      {THIN.map(([kind, points]) => (
        <polyline key={points} points={points} stroke={kind === "r" ? "#f00" : "#0f0"} />
      ))}
      <polyline points={MID_MA} stroke="#0f0" strokeWidth="4" />
      <path d="M2 585.500H1865" stroke="#ff0" />
      {VLINES.map(([x, color]) => <path key={x} d={`M${x}.5 107V847`} stroke={color} />)}
      <path d="M1208 300L1487 739" stroke="#ff0" />
      <path d="M838 200L1836 467" stroke="#ff80ff" strokeWidth="4" />
      <path d="M1577 574h8M1588 574v5M1592 577h6M1601 574h5M1609 578h5M1616 577h7" stroke="#000098" strokeWidth="2" strokeDasharray="2 1" />
      <path d="M2 847H1918" stroke="#000" strokeWidth="2" />
    </g>
    <g>
      {RED_DOWN.map(([x, y]) => (
        <path key={`${x}-${y}`} d={`M${x - 2} ${y - 5}h5v5h3l-5.500 5l-5.500-5h3z`} fill="#f00" />
      ))}
      {GREEN_UP.map(([x, y]) => (
        <path key={`${x}-${y}`} d={`M${x - 2} ${y + 5}h5v-5h3l-5.500-5l-5.500 5h3z`} fill="#0f0" />
      ))}
      {DOTS.map(([x, y]) => <ellipse key={`${x}-${y}`} cx={x + 0.5} cy={y} rx="4" ry="3.500" fill="#fff" />)}
    </g>
    <g filter="url(#lift)">
      <path d="M1546 546H1617M1551 599H1614" stroke="#fff" strokeWidth="7" strokeLinecap="round" />
      <BigArrow x0={1618} y0={526} x1={1670} y1={421} />
      <BigArrow x0={1693} y0={387} x1={1737} y1={310} />
      <BigArrow x0={1742} y0={282} x1={1800} y1={199} />
      <BigArrow x0={1685} y0={433} x1={1722} y1={477} />
    </g>
    <BlueArrow x={1847} y={484} up />
    <BlueArrow x={1846} y={568} />
    <BlueArrow x={1846} y={706} />
    <g fontFamily={LABEL} fill="#fff">
      {FIB.map(([label, y]) => <text key={label} x="1207" y={y}>{label}</text>)}
      <text x="3" y="653">1.000</text>
      <text x="3" y="808">0.500</text>
    </g>
    <rect x="3" y="768" width="120" height="78" fill="#ff8080" fillOpacity=".67" />
    <g fontWeight="700">
      {READOUT.map(([line, y]) => <text key={line} x="6" y={y}>{line}</text>)}
    </g>
    <text x="7" y="132" fontSize="11" fill="#b00014" fontFamily="DejaVu Sans">Locked</text>
    <g shapeRendering="crispEdges">
      <rect x="3" y="899" width="1862" height="1" fill="#fff" />
      {HISTOGRAM.map(({ x, y, fill }) => (
        <rect key={x} x={x} y={Math.min(y, 899)} width="3" height={Math.abs(y - 899)} fill={fill} />
      ))}
      <polyline points={SIGNAL} fill="none" stroke="#f00" />
      <path d="M2 979.500H1866M2 983.500H1866" stroke="#000" />
      {WEEK_STRIP.map(({ x, w, fill }) => <rect key={x} x={x} y="980" width={w} height="3" fill={fill} />)}
      <rect x="2" y="976" width="15" height="19" fill="#fff" stroke="#606060" />
      {TIMES.map(([x, , tick]) => tick && <path key={x} d={`M${x}.5 984V995`} stroke="#000" />)}
    </g>
    <g fontSize="11" fontFamily="DejaVu Sans">
      {TIMES.map(([x, label]) => <text key={x} x={x + 2} y="993">{label}</text>)}
    </g>
    <g fontWeight="700" shapeRendering="crispEdges">
      {PLAIN_PRICES.map(([value, y]) => <text key={value} x="1915" y={y + 4} textAnchor="end">{value}</text>)}
      {TAGS.map(([value, y, fill, ink]) => <PriceTag key={value} value={value} y={y} fill={fill} ink={ink} />)}
      <rect x="1870" y="106" width="48" height="9" fill="#000080" />
      <text x="1915" y="114" textAnchor="end" fill="#fff">INDEX</text>
    </g>
    <PanelLabel x={2} y={107} width={28}>Data</PanelLabel>
    <PanelLabel x={2} y={848} width={33}>MACD</PanelLabel>
    <rect x="1886" y="980" width="16" height="15" fill="#2010a8" />
    <rect x="1902" y="980" width="16" height="15" fill="#b01810" />
    <g fill="none" stroke="#fff">
      <path d="M1888.500 983.500h11v9h-11zM1891.500 985v6M1898 988h-5M1895 986l-2 2l2 2" />
      <path d="M1904.500 983.500h11v9h-11zM1907 988h6M1911 986l2 2l-2 2" />
    </g>
  </Chart>
);

/* ---------- taskbar drawings ---------- */

const TASKS = [
  ["Start", <path fill="#fff" d="M4 6l7-1v7H4zM12 5l8-1v8h-8zM4 13h7v7l-7-1zM12 13h8v8l-8-1z" />],
  ["Cortana", <circle cx="12" cy="12" r="7" fill="none" stroke="#fff" strokeWidth="2" />],
  ["Task View", <path d="M4 4v3h11V4M4 20v-3h11v3M4.500 9.500h10v5h-10zM18.500 4v4M18.500 13v7M17 10h3" fill="none" stroke="#fff" strokeWidth="1.400" />],
  ["Edge", <path fill="#0078d7" d="M2 11C3 5 7 1 12 1c6 0 10 4 10 10v3H9c0 4 6 6 11 3v4c-7 4-17 2-16-7 0-3 2-5 5-6-1 1-1 2-1 3h8c0-6-10-6-14 0z" />],
  ["File Explorer", <><path fill="#f5ce5e" d="M1 3h8l2 2h12v15H1z" /><path fill="#fbe39a" d="M3 7h20v13H3z" /><path fill="#3bafe8" d="M5 21v-8h14v8h-4v-4h-6v4z" /></>, null, true],
  ["Outlook", <><path fill="#fff" d="M12 5h11v11H12z" /><path fill="#0072c6" d="M1 3l13-2v22L1 20z" /><path d="M14 7l3 4 6-5" stroke="#0072c6" fill="none" strokeWidth="2" /><ellipse cx="7" cy="12" rx="3" ry="4" fill="none" stroke="#fff" strokeWidth="2" /><path fill="#f0c080" d="M11 14h13v10H11z" /><path d="M11 14l6 6 7-6" fill="none" stroke="#fff" strokeWidth="1.500" /></>, "alert"],
  ["PATrader", <><path fill="#f6f6f6" d="M1 2h22v20H1z" /><path d="M4 7v4M7 9v4M10 10v4" stroke="#e02020" strokeWidth="2" /><path d="M13 8v5M16 7v5M19 4v7" stroke="#20a020" strokeWidth="2" /><path d="M4 16h16M6 19h12" stroke="#555" strokeDasharray="2 1" /></>, "active"],
  ["Word", <><path fill="#fff" d="M12 4h11v16H12z" /><path d="M14 7h8M14 10h8M14 13h8M14 16h8" stroke="#2b579a" strokeWidth="1.500" /><path fill="#2b579a" d="M1 3l13-2v22L1 21z" /><path d="M4 8l2 8 2-7 2 7 2-8" fill="none" stroke="#fff" strokeWidth="1.500" /></>, null, true],
  ["Chrome", <><circle cx="12" cy="12" r="11" fill="#fbc116" /><path fill="#ea4335" d="M12 12L2.500 6.500A11 11 0 0 1 21.500 6.500L12 7z" /><path fill="#34a853" d="M12 12l-2 11A11 11 0 0 1 2.500 6.500z" /><circle cx="12" cy="12" r="5.500" fill="#fff" /><circle cx="12" cy="12" r="4" fill="#4285f4" /></>, null, true],
  ["PowerPoint", <><path fill="#fff" stroke="#d24726" d="M12 4h11v16H12z" /><circle cx="17" cy="9" r="3" fill="#d24726" /><path d="M14 15h7M14 17.500h7" stroke="#d24726" /><path fill="#d24726" d="M1 3l13-2v22L1 21z" /><path d="M5.500 17V8h3a2.500 2.500 0 0 1 0 5h-3" fill="none" stroke="#fff" strokeWidth="2" /></>],
  ["Notepad", <><path fill="#7cb8cc" d="M8 2l14 2-5 19-16-4z" /><path fill="#b4dcea" d="M8 2l7 1-6 18-8-2z" /><path d="M22 4l-5 19" stroke="#e8e8e8" strokeWidth="2" /></>],
  ["NinjaTrader", <><circle cx="12" cy="12" r="11.500" fill="#b4dc28" /><path d="M7 24V4l10 16V0" stroke="#20241a" strokeWidth="2.500" fill="none" /></>],
  ["Red Bull Trader", <path fill="#f03020" d="M1 6c3 4 7 4 11 6 3-3 7-5 11-5-4 2-6 7-10 10-3 2-5-1-5-3C5 13 2 10 1 6z" />],
  ["Zoom", <><circle cx="12" cy="12" r="11.500" fill="#d8ecff" /><circle cx="12" cy="12" r="10.500" fill="#2d8cff" /><rect x="5" y="8" width="9" height="8" rx="2" fill="#fff" /><path fill="#fff" d="M15 11l4-3v8l-4-3z" /></>],
  ["Sticky Notes", <><path fill="#f6dc6a" d="M4 3l14-1 1 15-13 2z" /><path d="M5 3h3" stroke="#e02020" strokeWidth="3" /><path d="M9 3h6" stroke="#30b030" strokeWidth="3" /><path d="M8 12q4 4 7-1M9 8v2M14 7v2" fill="none" stroke="#6a5010" /><path d="M12 19c6 0 10-1 9 3s-6 1-5 0" fill="none" stroke="#e0a060" strokeWidth="2" /></>],
  ["Calculator", <><path fill="#fff" d="M3 0h18v24H3z" /><path d="M5 2h14v4H5z" /><path d="M6 10h3M11 10h3M16 10h3M6 14h3M11 14h3M16 14h3M6 17.500h3M11 17.500h3M16 17.500h3M6 21h3M11 21h3M16 21h3" stroke="#000" strokeWidth="2" /></>],
  ["Excel", <><path fill="#fff" stroke="#217346" d="M12 4h11v16H12z" /><path d="M14 8h8M14 12h8M14 16h8M18 5v14" stroke="#217346" /><path fill="#217346" d="M1 3l13-2v22L1 21z" /><path d="M4 8l6 8M10 8l-6 8" stroke="#fff" strokeWidth="2" /></>],
  ["Control Panel", <><path fill="#5cb8f0" d="M1 4h22v16H1z" /><path fill="#2a88d0" d="M3 6h18v12H3z" /><circle cx="8" cy="11" r="4" fill="#fff" /><path fill="#f0a020" d="M8 11V7a4 4 0 0 1 4 4z" /><path d="M14 9h5M14 12h5M14 15h5" stroke="#fff" strokeWidth="1.500" /></>],
  ["Camtasia Recorder", <><path fill="#fff" d="M0 0h24v24l-4-2H0z" /><path d="M17 5h-5q-5 0-5 7t5 7h5" fill="none" stroke="#2c4420" strokeWidth="4" /></>],
  ["Camtasia", <><path fill="#58a618" d="M0 0h24v24H0z" /><path d="M18 6h-5q-6 0-6 6t6 6h5" fill="none" stroke="#fff" strokeWidth="4" /></>],
  ["CuteFTP", <><path fill="#fff" d="M0 0h24v24H0z" /><path d="M1 7q8-6 19-4M1 11q8-6 20-4" fill="none" stroke="#38a0d8" strokeWidth="2" /><text x="5" y="13" fontSize="7" fontWeight="700" fill="#2070b0">cute</text><text x="4" y="21" fontSize="9" fontWeight="700" fill="#60b020">FTP</text></>],
  ["OneDrive folder", <><path fill="#f5d078" d="M3 2h10l3 3v17H3z" /><path fill="#fbe4a8" d="M6 4h7v16H6z" /><path fill="#0f6cbd" d="M9 22a4 4 0 0 1 1-7 5 5 0 0 1 8-1 4 4 0 0 1 4 8z" stroke="#fff" /></>],
  ["Planner", <><path fill="#d08050" d="M8 1l14 3-6 19L2 18z" /><path fill="#f4f0fa" d="M9 5l10 2-4 12-10-3z" /><text x="7" y="14" fontSize="8" fontWeight="700" fill="#5050b0">10</text></>],
];

const TABS = [
  "NZD RF", "GBPJPY RF", "EURJPY RF", "AUD RF", "USDJPY", "CHF RF", "CAD RF", "GBP RF", "EURUSD RF", "AUD¥EN", "EURGBP",
  "EURAUD", "CAD¥EN", "GBPAUD", "EURNZD RF", "£ NZD RF", "NZD¥", "AUDCHF", "£ CHF", "AUDNZD", "WildCard", "6 Aces-Majors",
  "6 Aces-Exotics", "6 Aces-4", "6 aces 2", "BTCUSD", "LTCUSD", "ETHUSD", "Apple",
];

export default function App() {
  return (
    <Window>
      <GlobalStyle />
      <TitleBar>
        <LogoX />
        <Title>PATrader - EURUSD RF - [EURUSD.F, 240 min - [FXCM] Euro vs US Dollar]</Title>
        <CaptionGroup>
          <CaptionButton aria-label="Minimize"><svg width="10" height="10" stroke="#000"><path d="M0 5.500h10" /></svg></CaptionButton>
          <CaptionButton aria-label="Restore"><svg width="11" height="11" stroke="#000" fill="none"><path d="M.5 3.500h7v7h-7zM2.500 3V.5h8v7H8" /></svg></CaptionButton>
          <CaptionButton aria-label="Close"><svg width="11" height="11" stroke="#000"><path d="M.5.500l10 10M10.500.500l-10 10" /></svg></CaptionButton>
        </CaptionGroup>
      </TitleBar>
      <MenuBar>
        <Grip />
        <MenuIcon viewBox="0 0 16 16" aria-hidden="true">
          <path fill="#c0c0c0" d="M0 0h16v16H0z" />
          <path d="M1 0v15h15" stroke="#007000" fill="none" />
          <path d="M1 8l2 3 4-5 3 1 5-5" stroke="#000" fill="none" strokeWidth="1.500" />
        </MenuIcon>
        {["Page", "View", "Actions", "Charts", "Quotes", "System", "Tools", "Window", "Help"].map((m) => (
          <MenuButton key={m}>{m}</MenuButton>
        ))}
        <MdiGroup>
          <MdiButton aria-label="Minimize page"><svg width="9" height="9"><path d="M2 7h6" stroke="#7c8a9c" strokeWidth="2" /></svg></MdiButton>
          <MdiButton aria-label="Restore page"><svg width="9" height="9" fill="none" stroke="#7c8a9c"><path d="M.5 4.500h5v4h-5zM.5 5h5M3 3V1.500h5.500V6H7M3 1h5" /></svg></MdiButton>
          <MdiButton aria-label="Close page"><svg width="9" height="9" stroke="#7c8a9c" strokeWidth="2"><path d="M1 1l6 7M7 1l-6 7" /></svg></MdiButton>
        </MdiGroup>
        <Pointer viewBox="0 0 13 20" aria-hidden="true">
          <path d="M.5.500v16l4-3 2.500 5.500 2.500-1-2.500-5.500h5z" fill="#fff" stroke="#223" />
        </Pointer>
      </MenuBar>
      <ToolBar>
        <Grip />
        <ToolSet>
          {CHART_STYLES.map(([label, art]) => (
            <ToolButton key={label} aria-label={label}><Glyph label={label}>{art}</Glyph></ToolButton>
          ))}
        </ToolSet>
      </ToolBar>
      <ToolBar $last>
        <Grip />
        <ToolSet>
          <ToolButton aria-label="Narrow bars"><Glyph label="Narrow bars"><g shapeRendering="auto"><path d="M5 2h6v2H5z" fill="#f00" /><path d="M2 5l5 5-5 4v-3H0V8h2zM14 5l-5 5 5 4v-3h2V8h-2z" fill="#0078d7" /></g></Glyph></ToolButton>
          <ToolButton aria-label="Widen bars"><Glyph label="Widen bars"><g shapeRendering="auto"><path d="M7 0h2v2h2v2H9v2H7V4H5V2h2z" fill="#f00" /><path d="M5 6v2h6V6l5 4-5 4v-3H5v3l-5-4z" fill="#0078d7" /></g></Glyph></ToolButton>
          <Divider />
          <ToolButton aria-label="Indicators"><Glyph label="Indicators"><Axes /><path d="M6 15v-4h2v4zM9 15V6h2v9zM12 15V4h2v11z" fill="#0f0" /><g shapeRendering="auto"><K d="M1 11L8 8C10 1 14 1 15 9V15" /></g><path d="M2 12.500h4M6 9.500h2" stroke="#e00" /></Glyph></ToolButton>
          <Divider />
          <ToolButton aria-label="Crosshair"><Glyph label="Crosshair"><K d="M8.500 2V15M2 8.500H15" /></Glyph></ToolButton>
          <Divider />
          <ToolButton aria-label="Select"><svg width="16" height="16" viewBox="0 0 16 16"><path d="M4.500 1.500v11l2.500-2 2 4 2-1-2-4h3.500z" fill="#fff" stroke="#000" /></svg></ToolButton>
          {DRAW_TOOLS.map(([label, art]) => (
            <ToolButton key={label} aria-label={label}><Glyph label={label}>{art}</Glyph></ToolButton>
          ))}
        </ToolSet>
        <More aria-label="More tools">»</More>
        <FullDivider />
        <Grip />
        <ToolSet>
          {["1m", "3m", "5m", "10m", "15m", "30m", "60m", "240", "360"].map((t) => <ToolButton key={t}>{t}</ToolButton>)}
          <Divider />
          {["D", "W", "M"].map((t) => <ToolButton key={t}>{t}</ToolButton>)}
          <Divider />
          <ToolButton aria-label="Clock"><svg width="13" height="13" fill="none" stroke="#000" strokeWidth="2"><circle cx="6.500" cy="6.500" r="5" /><path d="M6.500 3v4h3" /></svg></ToolButton>
        </ToolSet>
      </ToolBar>
      <PriceChart />
      <TabBar>
        <TabList>
          <TabLead />
          {TABS.map((t) => <Tab key={t} $active={t === "EURUSD RF"}>{t}</Tab>)}
        </TabList>
        <TabArrows>
          <ArrowButton aria-label="Scroll tabs left"><svg width="6" height="10" fill="none" stroke="#333"><path d="M5 1v8L1 5z" /></svg></ArrowButton>
          <ArrowButton aria-label="Scroll tabs right"><svg width="6" height="10" fill="none" stroke="#333"><path d="M1 1v8l4-4z" /></svg></ArrowButton>
        </TabArrows>
      </TabBar>
      <StatusBar>
        <StatusCell $first $pad={2}>Ready</StatusCell>
        <StatusCell $pad={9}>
          <svg width="13" height="11" viewBox="0 0 13 11" aria-hidden="true"><path d="M.5.500h12v10H.5z" fill="#e8e8e8" stroke="#999" /><path d="M1 1l5.500 6L12 1M1 10l4-4M12 10L8 6" stroke="#777" fill="none" /></svg>
          0 message(s)
        </StatusCell>
        <StatusCell>Sent: 18 Kb/Recv: 2295 Kb</StatusCell>
        <StatusCell>Connected/98 ms</StatusCell>
        <StatusCell><svg width="17" height="16" role="img" aria-label="Online"><path d="M0 0h17v16H0z" /><ellipse cx="8.500" cy="8" rx="6" ry="6" fill="#008000" /></svg></StatusCell>
        <StatusCell>23/02/2019 15:41 GMT</StatusCell>
        <StatusCell>23/02/2019 09:41:15 Local</StatusCell>
        <StatusCell><svg width="18" height="16" role="img" aria-label="Alerts"><path d="M0 0h18v16H0z" /><path d="M9 2l7 12H2zM9 6v4M9 11v2" fill="none" stroke="#bbb" /></svg></StatusCell>
      </StatusBar>
      <Taskbar>
        {TASKS.map(([label, art, tone, running]) => (
          <TaskButton key={label} aria-label={label} $tone={tone} $running={running}>
            <svg viewBox="0 0 24 24" aria-hidden="true">{art}</svg>
          </TaskButton>
        ))}
        <Clock dateTime="2019-02-23T09:41">
          <span>9:41 AM</span>
          <span>2/23/2019</span>
        </Clock>
      </Taskbar>
    </Window>
  );
}
